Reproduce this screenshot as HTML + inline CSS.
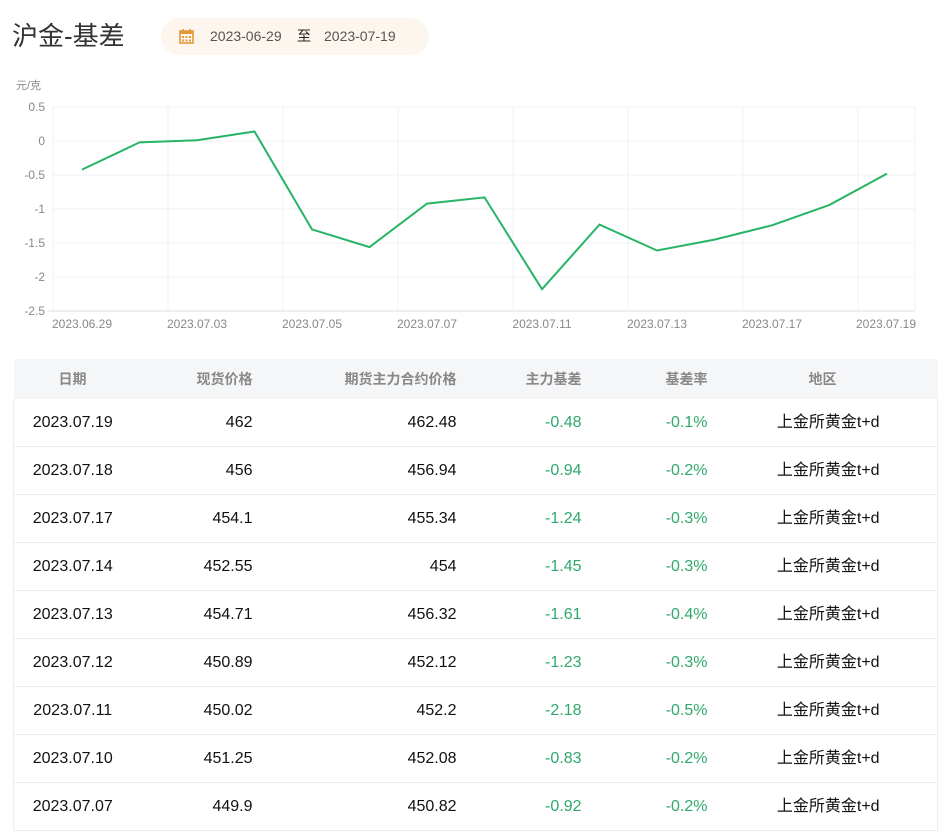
<!DOCTYPE html><html><head><meta charset="utf-8"><style>
body{margin:0;background:#fff;font-family:"Liberation Sans","Noto Sans CJK SC",sans-serif;width:947px;height:826px;overflow:hidden;position:relative}
.t{position:absolute;left:12px;top:18px;font-size:26px;line-height:36px;color:#333;}
.d{position:absolute;left:161px;top:18px;width:268px;height:37px;border-radius:19px;background:#fdf6ee;font-size:14px;color:#555;}
.d span{position:absolute;top:10px;line-height:17px}
table{position:absolute;left:13px;top:359px;width:925px;border-collapse:collapse;font-size:16px}
th{height:40px;background:#f5f6f8;color:#888;font-weight:bold;font-size:14px;padding:0;line-height:16px}
td{height:47px;border-bottom:1px solid #eee;padding:0;color:#111;line-height:18px;vertical-align:middle}
.r{text-align:right}.c{text-align:center}.g{color:#2fa86b}
td.reg{padding-left:12px;text-align:center}
tr td:first-child{border-left:1px solid #eee}tr td:last-child{border-right:1px solid #eee}
</style></head><body>
<div class="t">沪金-基差</div>
<div class="d"><svg style="position:absolute;left:18px;top:11px" width="15" height="15" viewBox="0 0 15 15"><rect x="1" y="2" width="13" height="12" fill="none" stroke="#e39a3b" stroke-width="1.6"/><rect x="1" y="2" width="13" height="3" fill="#e39a3b"/><line x1="4" y1="0" x2="4" y2="3" stroke="#e39a3b" stroke-width="1.6"/><line x1="11" y1="0" x2="11" y2="3" stroke="#e39a3b" stroke-width="1.6"/><g fill="#e39a3b"><rect x="3" y="7" width="2" height="2"/><rect x="6.5" y="7" width="2" height="2"/><rect x="10" y="7" width="2" height="2"/><rect x="3" y="10.5" width="2" height="2"/><rect x="6.5" y="10.5" width="2" height="2"/><rect x="10" y="10.5" width="2" height="2"/></g></svg>
<span style="left:49px">2023-06-29</span><span style="left:136px;color:#222">至</span><span style="left:163px">2023-07-19</span></div>
<svg style="position:absolute;left:0;top:70px" width="947" height="270" viewBox="0 70 947 270" font-family="Liberation Sans,Noto Sans CJK SC,sans-serif" font-size="12" fill="#888">
<text x="16" y="89" font-size="11">元/克</text>
<g stroke="#f0f0f0" stroke-width="1">
<line x1="53" x2="915" y1="107" y2="107"/><line x1="53" x2="915" y1="141" y2="141"/><line x1="53" x2="915" y1="175" y2="175"/><line x1="53" x2="915" y1="209" y2="209"/><line x1="53" x2="915" y1="243" y2="243"/><line x1="53" x2="915" y1="277" y2="277"/><line x1="48" x2="915" y1="311" y2="311" stroke="#ddd"/>
<line x1="53" x2="53" y1="107" y2="311"/><line x1="168" x2="168" y1="107" y2="311"/><line x1="283" x2="283" y1="107" y2="311"/><line x1="398" x2="398" y1="107" y2="311"/><line x1="513" x2="513" y1="107" y2="311"/><line x1="628" x2="628" y1="107" y2="311"/><line x1="743" x2="743" y1="107" y2="311"/><line x1="858" x2="858" y1="107" y2="311"/><line x1="915" x2="915" y1="107" y2="311"/>
</g>
<g text-anchor="end"><text x="45" y="111">0.5</text><text x="45" y="145">0</text><text x="45" y="179">-0.5</text><text x="45" y="213">-1</text><text x="45" y="247">-1.5</text><text x="45" y="281">-2</text><text x="45" y="315">-2.5</text></g>
<g text-anchor="middle"><text x="82" y="328">2023.06.29</text><text x="197" y="328">2023.07.03</text><text x="312" y="328">2023.07.05</text><text x="427" y="328">2023.07.07</text><text x="542" y="328">2023.07.11</text><text x="657" y="328">2023.07.13</text><text x="772" y="328">2023.07.17</text><text x="886" y="328">2023.07.19</text></g>
<polyline fill="none" stroke="#27b466" stroke-width="2" points="82,169.6 139.5,142.4 197,140.3 254.5,131.5 312,229.4 369.5,247.1 427,203.6 484.5,197.4 542,289.2 599.5,224.6 657,250.5 714.5,239.6 772,225.3 829.5,204.9 887,173.6"/>
</svg>
<table>
<tr><th style="width:118px">日期</th><th class="r" style="width:121px">现货价格</th><th class="r" style="width:204px">期货主力合约价格</th><th class="r" style="width:125px">主力基差</th><th class="r" style="width:126px">基差率</th><th class="c">地区</th></tr>
<tr><td class="c">2023.07.19</td><td class="r">462</td><td class="r">462.48</td><td class="r g">-0.48</td><td class="r g">-0.1%</td><td class="reg">上金所黄金t+d</td></tr>
<tr><td class="c">2023.07.18</td><td class="r">456</td><td class="r">456.94</td><td class="r g">-0.94</td><td class="r g">-0.2%</td><td class="reg">上金所黄金t+d</td></tr>
<tr><td class="c">2023.07.17</td><td class="r">454.1</td><td class="r">455.34</td><td class="r g">-1.24</td><td class="r g">-0.3%</td><td class="reg">上金所黄金t+d</td></tr>
<tr><td class="c">2023.07.14</td><td class="r">452.55</td><td class="r">454</td><td class="r g">-1.45</td><td class="r g">-0.3%</td><td class="reg">上金所黄金t+d</td></tr>
<tr><td class="c">2023.07.13</td><td class="r">454.71</td><td class="r">456.32</td><td class="r g">-1.61</td><td class="r g">-0.4%</td><td class="reg">上金所黄金t+d</td></tr>
<tr><td class="c">2023.07.12</td><td class="r">450.89</td><td class="r">452.12</td><td class="r g">-1.23</td><td class="r g">-0.3%</td><td class="reg">上金所黄金t+d</td></tr>
<tr><td class="c">2023.07.11</td><td class="r">450.02</td><td class="r">452.2</td><td class="r g">-2.18</td><td class="r g">-0.5%</td><td class="reg">上金所黄金t+d</td></tr>
<tr><td class="c">2023.07.10</td><td class="r">451.25</td><td class="r">452.08</td><td class="r g">-0.83</td><td class="r g">-0.2%</td><td class="reg">上金所黄金t+d</td></tr>
<tr><td class="c">2023.07.07</td><td class="r">449.9</td><td class="r">450.82</td><td class="r g">-0.92</td><td class="r g">-0.2%</td><td class="reg">上金所黄金t+d</td></tr>
</table>
</body></html>
